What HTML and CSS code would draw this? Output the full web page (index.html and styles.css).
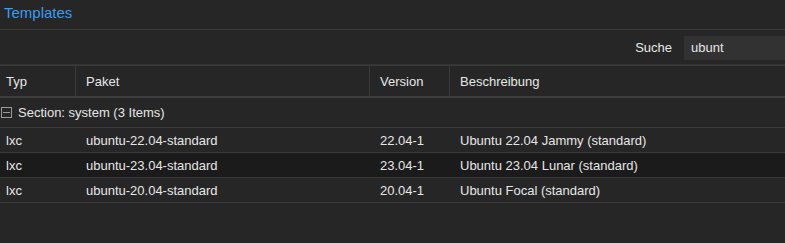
FILE: index.html
```html
<!DOCTYPE html>
<html lang="de">
<head>
    <meta charset="UTF-8">
    <title>Templates</title>
    <link rel="stylesheet" href="styles.css">
</head>
<body>
    <!-- Panel header -->
    <div class="panel-title">Templates</div>

    <!-- Toolbar with search -->
    <div class="toolbar">
        <label class="search-label" for="search">Suche</label>
        <input type="text" id="search" class="search-field" value="ubunt">
    </div>

    <!-- Grid -->
    <div class="grid">
        <div class="grid-row grid-head">
            <div class="cell cell-first">Typ</div>
            <div class="cell">Paket</div>
            <div class="cell">Version</div>
            <div class="cell">Beschreibung</div>
        </div>

        <div class="group-row">
            <span class="group-toggle"></span>
            Section: system (3 Items)
        </div>

        <div class="grid-row">
            <div class="cell cell-first">lxc</div>
            <div class="cell">ubuntu-22.04-standard</div>
            <div class="cell">22.04-1</div>
            <div class="cell">Ubuntu 22.04 Jammy (standard)</div>
        </div>
        <div class="grid-row selected">
            <div class="cell cell-first">lxc</div>
            <div class="cell">ubuntu-23.04-standard</div>
            <div class="cell">23.04-1</div>
            <div class="cell">Ubuntu 23.04 Lunar (standard)</div>
        </div>
        <div class="grid-row">
            <div class="cell cell-first">lxc</div>
            <div class="cell">ubuntu-20.04-standard</div>
            <div class="cell">20.04-1</div>
            <div class="cell">Ubuntu Focal (standard)</div>
        </div>
    </div>
</body>
</html>
```

FILE: styles.css
```css
body {
    margin: 0;
    background-color: #262626;
    color: #e6e6e6;
    font-family: 'Liberation Sans', Arial, sans-serif;
    font-size: 13px;
    height: 243px;
    overflow: hidden;
}

/* Panel header */
.panel-title {
    height: 29px;
    line-height: 26px;
    padding-left: 4px;
    font-size: 15px;
    color: #3b9cf0;
    border-bottom: 1px solid #3a3a3a;
}

/* Toolbar */
.toolbar {
    height: 35px;
    display: flex;
    align-items: center;
    justify-content: flex-end;
    border-bottom: 1px solid #333;
    box-sizing: border-box;
    padding-top: 1px;
}

.search-label {
    margin-right: 12px;
    color: #e6e6e6;
}

.search-field {
    width: 101px;
    height: 24px;
    box-sizing: border-box;
    border: none;
    background-color: #323232;
    color: #e6e6e6;
    font-family: inherit;
    font-size: 13px;
    padding: 0 7px;
    outline: none;
}

/* Grid */
.grid-row {
    display: grid;
    grid-template-columns: 75px 294px 80px 1fr;
    height: 25px;
    border-bottom: 1px solid #3a3a3a;
    box-sizing: border-box;
    align-items: center;
}

.grid-head {
    height: 33px;
    border-top: 1px solid #3a3a3a;
    border-bottom: 2px solid #3d3d3d;
}

.grid-head .cell {
    height: 100%;
    display: flex;
    align-items: center;
    border-left: 1px solid #3a3a3a;
    padding-left: 10px;
}

.grid-head .cell-first {
    border-left: none;
    padding-left: 6px;
}

.cell {
    padding-left: 11px;
    white-space: nowrap;
    overflow: hidden;
}

.cell-first {
    padding-left: 6px;
}

.grid-row.selected {
    background-color: #1b1b1b;
}

.group-row {
    height: 30px;
    display: flex;
    align-items: center;
    border-bottom: 1px solid #3a3a3a;
    box-sizing: border-box;
    padding-left: 1px;
}

.group-toggle {
    width: 9px;
    height: 9px;
    border: 1px solid #9a9a9a;
    position: relative;
    margin-right: 6px;
}

.group-toggle::after {
    content: '';
    position: absolute;
    left: 1px;
    right: 1px;
    top: 4px;
    height: 1px;
    background-color: #9a9a9a;
}
```
